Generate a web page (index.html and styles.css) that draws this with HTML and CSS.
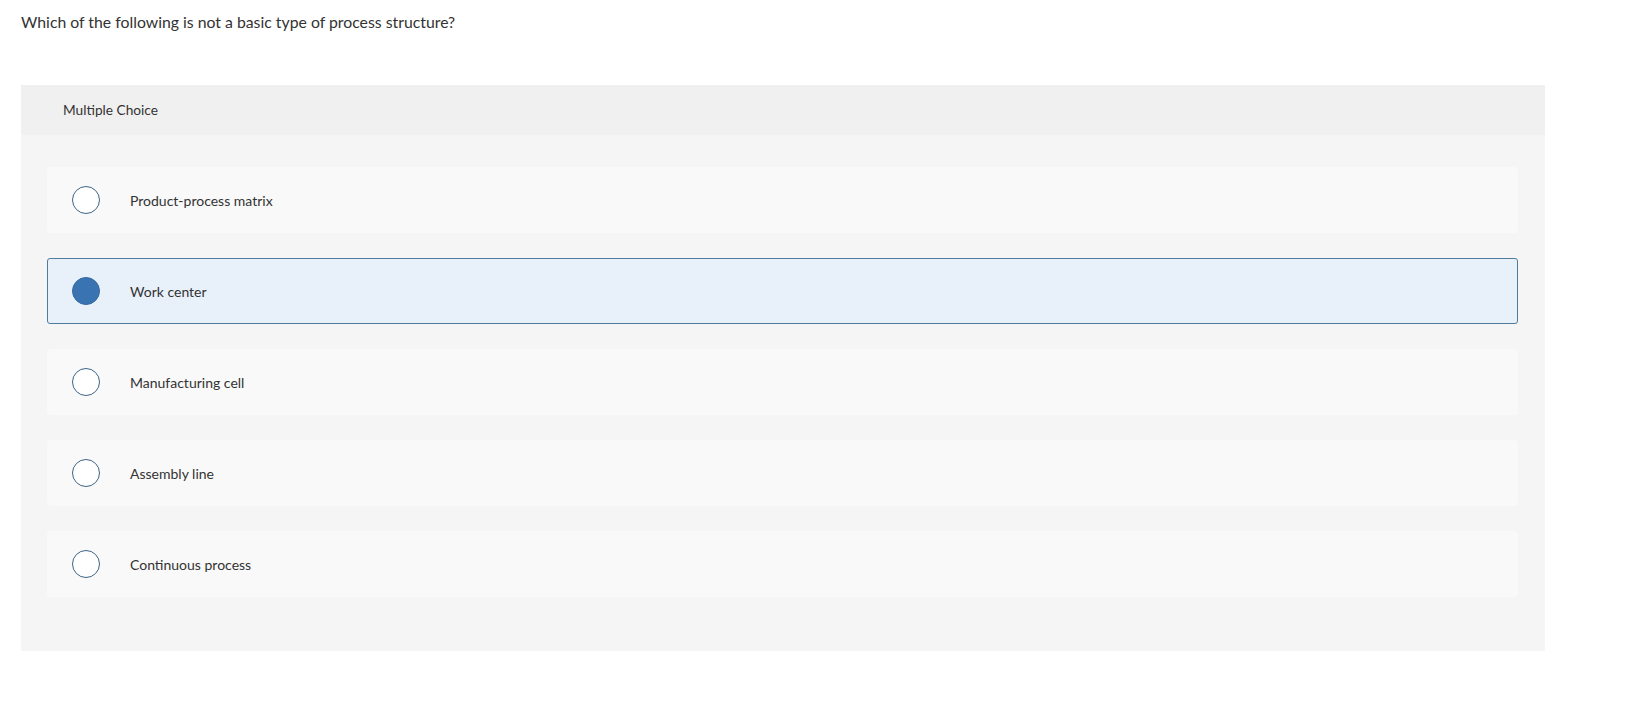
FILE: index.html
```html
<!DOCTYPE html>
<html lang="en">
<head>
<meta charset="utf-8">
<title>Multiple Choice</title>
<link rel="stylesheet" href="styles.css">
</head>
<body>
<div class="page">
  <p class="question">Which of the following is not a basic type of process structure?</p>
  <section class="panel">
    <header class="panel-head">Multiple Choice</header>
    <div class="panel-body">
      <div class="option"><span class="radio"></span><span class="label">Product-process matrix</span></div>
      <div class="option selected"><span class="radio"></span><span class="label">Work center</span></div>
      <div class="option"><span class="radio"></span><span class="label">Manufacturing cell</span></div>
      <div class="option"><span class="radio"></span><span class="label">Assembly line</span></div>
      <div class="option"><span class="radio"></span><span class="label">Continuous process</span></div>
    </div>
  </section>
</div>
</body>
</html>
```
FILE: styles.css
```css
html, body {
  margin: 0;
  padding: 0;
  background: #ffffff;
}
.page {
  font-family: Lato, "Liberation Sans", sans-serif;
  color: #333333;
  padding: 0 0 0 21px;
}
.question {
  margin: 0;
  padding-top: 13px;
  height: 85px;
  box-sizing: border-box;
  font-size: 15.8px;
  line-height: 18px;
}
.panel {
  width: 1524px;
  background: #f5f5f5;
}
.panel-head {
  height: 50px;
  background: #f0f0f0;
  padding-left: 42px;
  font-size: 13.7px;
  line-height: 50px;
  box-sizing: border-box;
}
.panel-body {
  padding: 32px 27px 54px 26px;
  display: flex;
  flex-direction: column;
  gap: 25px;
}
.option {
  height: 66px;
  box-sizing: border-box;
  background: #f9f9f9;
  border: 1px solid #f9f9f9;
  border-radius: 3px;
  display: flex;
  align-items: center;
  padding-left: 24px;
  font-size: 14px;
}
.option.selected {
  background: #e8f1fa;
  border-color: #4f7c9c;
}
.radio {
  width: 28px;
  height: 28px;
  box-sizing: border-box;
  border: 1.5px solid #3e6484;
  border-radius: 50%;
  background: #ffffff;
  flex: none;
}
.selected .radio {
  background: #3a73b2;
  border-color: #336a9f;
}
.label {
  margin-left: 30px;
}
```
